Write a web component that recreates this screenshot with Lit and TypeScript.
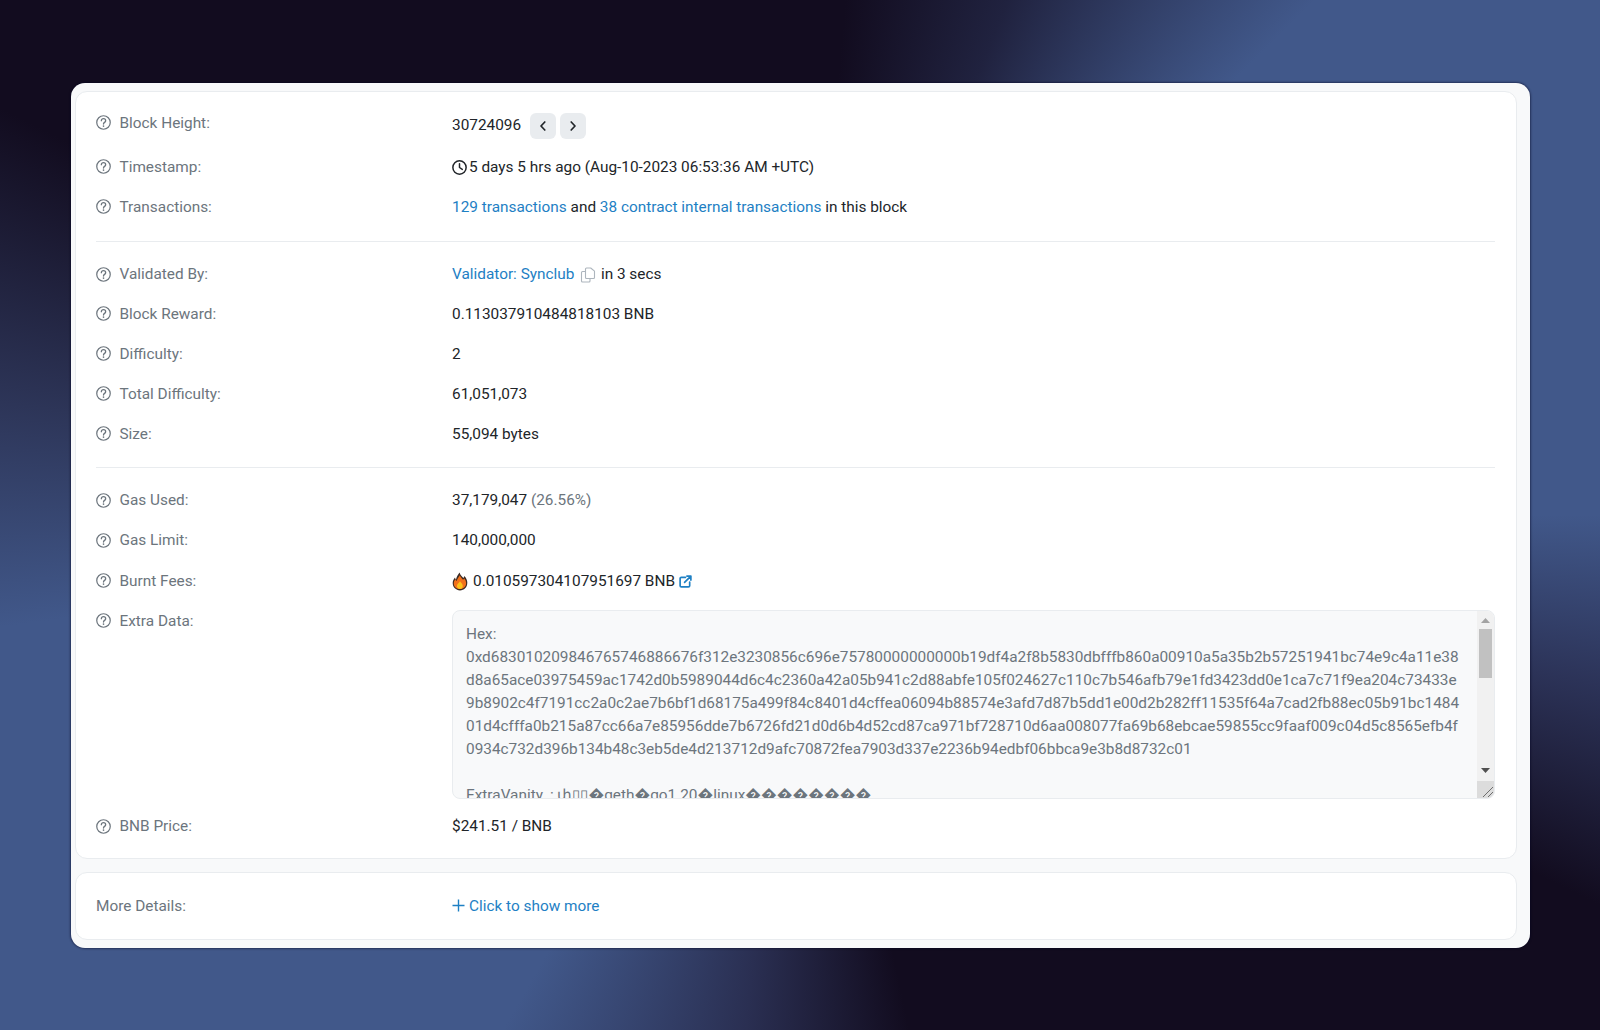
import { LitElement, html, css } from "lit";
import { customElement } from "lit/decorators.js";

const help = html`<svg class="help" viewBox="0 0 16 16" fill="none" stroke="#6c757d"><circle cx="8" cy="8" r="7.200" stroke-width="1.300"/><path d="M5.700 6.100C5.800 4.600 6.800 3.900 8 3.900c1.300 0 2.300.9 2.300 2.100 0 1.800-2.300 1.900-2.300 3.600" stroke-width="1.400" stroke-linecap="round"/><circle cx="8" cy="11.800" r=".9" fill="#6c757d" stroke="none"/></svg>`;

const row = (label: string, value: unknown) => html`<div class="row"><div class="label">${help}<span>${label}</span></div><div class="value">${value}</div></div>`;

const hexLines = [
  "Hex:",
  "0xd683010209846765746886676f312e3230856c696e75780000000000b19df4a2f8b5830dbfffb860a00910a5a35b2b57251941bc74e9c4a11e38",
  "d8a65ace03975459ac1742d0b5989044d6c4c2360a42a05b941c2d88abfe105f024627c110c7b546afb79e1fd3423dd0e1ca7c71f9ea204c73433e",
  "9b8902c4f7191cc2a0c2ae7b6bf1d68175a499f84c8401d4cffea06094b88574e3afd7d87b5dd1e00d2b282ff11535f64a7cad2fb88ec05b91bc1484",
  "01d4cfffa0b215a87cc66a7e85956dde7b6726fd21d0d6b4d52cd87ca971bf728710d6aa008077fa69b68ebcae59855cc9faaf009c04d5c8565efb4f",
  "0934c732d396b134b48c3eb5de4d213712d9afc70872fea7903d337e2236b94edbf06bbca9e3b8d8732c01",
  "",
  "ExtraVanity \u2009: \u0583\u25AF\u25AF\uFFFDgeth\uFFFDgo1.20\uFFFDlinux\uFFFD\uFFFD\uFFFD\uFFFD\uFFFD\uFFFD\uFFFD\uFFFD",
];

@customElement("app-root")
export class AppRoot extends LitElement {
  static styles = css`
    :host { display: block; font-family: Roboto, "Liberation Sans", sans-serif; font-size: 15.36px; color: #212529; }
    * { box-sizing: border-box; }
    .scene {
      height: 1030px; padding: 83px 70px 82px 71px;
      background: conic-gradient(from 0deg at 50% 50%, #120c1f 0deg, #120c1f 5deg, #20223f 22deg, #41588a 45deg, #41588a 90deg, #2c3358 102deg, #120c1f 116deg, #120c1f 168deg, #2a2f52 186deg, #41588a 210deg, #41588a 262deg, #2d3558 278deg, #120c1f 297deg, #120c1f 360deg);
    }
    .panel { height: 865px; background: #f8f9fa; border-radius: 14px; padding: 8px 13px 8px 4px; display: flex; flex-direction: column; gap: 13px; box-shadow: 0 0 2px 1px rgba(0, 0, 30, .45); }
    .card { background: #fff; border: 1px solid #e9ecef; border-radius: 12px; padding: 21px 21px 20px 20px; }
    .main { height: 769px; }
    .more { height: 68px; padding-top: 0; padding-bottom: 0; display: grid; grid-template-columns: 356px 1fr; align-items: center; }
    .section { display: flex; flex-direction: column; gap: 18.6px; }
    .row { display: grid; grid-template-columns: 356px 1fr; line-height: 21.6px; }
    .label { display: flex; align-items: center; gap: 8.500px; color: #6c757d; height: 21.600px; }
    .muted { color: #6c757d; }
    .help { width: 15px; height: 15px; flex: none; margin-top: -2px; }
    hr { border: 0; border-top: 1px solid #e9ecef; margin: 0; }
    .hr1 { margin: 22.500px 0 21.500px; }
    .hr2 { margin: 21px 0 22.500px; }
    .lead .row:first-child { padding-top: 1px; margin-bottom: -1px; }
    a { color: #1e80c4; text-decoration: none; }
    .first { display: flex; align-items: center; height: 27px; margin-top: -1px; margin-bottom: -1px; }
    .pager { display: flex; gap: 4px; margin-left: 9px; }
    .pager span { width: 26px; height: 26px; border-radius: 6px; background: #e9ecef; display: flex; align-items: center; justify-content: center; }
    .pager svg { width: 10px; height: 12px; }
    .inline { display: flex; align-items: center; }
    .clock { width: 15px; height: 15px; margin-right: 2px; }
    .copy { width: 16px; height: 16px; margin: 0 5px 0 5.500px; }
    .flame { width: 16px; height: 19px; margin-right: 5px; }
    .ext { width: 13px; height: 13px; margin-left: 4px; }
    .plus { width: 13px; height: 13px; margin-right: 4px; margin-top: -1px; }
    .box { position: relative; height: 189px; margin-top: -1px; margin-bottom: -1px; overflow: hidden; background: #f8f9fa; border: 1px solid #e9ecef; border-radius: 8px; padding: 12.500px 13px; color: #6c757d; line-height: 22.950px; white-space: pre; }
    .line { height: 22.950px; }
    .scroll { position: absolute; top: 0; right: 0; bottom: 0; width: 17px; background: #f1f1f1; }
    .thumb { position: absolute; left: 2px; top: 18px; width: 13px; height: 49px; background: #c1c1c1; }
    .up, .down { position: absolute; left: 4px; width: 9px; height: 5px; }
    .up { top: 7px; }
    .down { top: 157px; }
    .grip { position: absolute; left: 0; bottom: 0; width: 17px; height: 17px; background: #dcdcdc; }
  `;

  render() {
    const chevron = (d: string) => html`<svg viewBox="0 0 10 12" fill="none" stroke="#212529" stroke-width="1.700" stroke-linecap="round" stroke-linejoin="round"><path d=${d}/></svg>`;
    return html`<div class="scene"><div class="panel">
      <div class="card main">
        <div class="section">
          <div class="row"><div class="label">${help}<span>Block Height:</span></div>
            <div class="first"><span>30724096</span><div class="pager"><span>${chevron("M6.800 2 3 6l3.800 4")}</span><span>${chevron("M3.200 2 7 6l-3.800 4")}</span></div></div></div>
          ${row("Timestamp:", html`<div class="inline"><svg class="clock" viewBox="0 0 14 14" fill="none" stroke="#212529" stroke-width="1.400"><circle cx="7" cy="7" r="6.200"/><path d="M7 3.400V7l2.600 1.800" stroke-linecap="round" stroke-linejoin="round"/></svg><span>5 days 5 hrs ago (Aug-10-2023 06:53:36 AM +UTC)</span></div>`)}
          ${row("Transactions:", html`<a href="#">129 transactions</a> and <a href="#">38 contract internal transactions</a> in this block`)}
        </div>
        <hr class="hr1" />
        <div class="section lead">
          ${row("Validated By:", html`<div class="inline"><a href="#">Validator: Synclub</a><svg class="copy" viewBox="0 0 16 16" fill="none" stroke="#adb5bd" stroke-width="1.100" stroke-linejoin="round"><path d="M6.500 1h4.200L14.500 4.200V10.500a1 1 0 0 1-1 1h-7a1 1 0 0 1-1-1V2a1 1 0 0 1 1-1Z"/><path d="M5.500 4.500H2.500a1 1 0 0 0-1 1V14a1 1 0 0 0 1 1h6.500a1 1 0 0 0 1-1v-2.500"/></svg><span>in 3 secs</span></div>`)}
          ${row("Block Reward:", "0.113037910484818103 BNB")}
          ${row("Difficulty:", "2")}
          ${row("Total Difficulty:", "61,051,073")}
          ${row("Size:", "55,094 bytes")}
        </div>
        <hr class="hr2" />
        <div class="section">
          ${row("Gas Used:", html`37,179,047 <span class="muted">(26.56%)</span>`)}
          ${row("Gas Limit:", "140,000,000")}
          ${row("Burnt Fees:", html`<div class="inline"><svg class="flame" viewBox="0 0 16 19"><path d="M7.600.6c.6 2.600 2.200 3.600 3.800 5.400.5-.6.8-1.300.9-2 2 2.100 3 4.300 3 6.800 0 4.600-3.300 7.600-7.300 7.600S.7 15.300.7 11.100c0-2.300 1-4 2.300-5.500.2 1 .5 1.600 1 2.100C4.400 5 5.800 3 7.600.6Z" fill="#3a2a24"/><path d="M7.900 3.200c.4 1.800 2 3 3.200 4.500.5-.4.800-.9 1-1.400 1.300 1.500 2 3.100 2 5 0 3.200-2.400 5.800-6 5.800s-6.300-2.500-6.300-5.700c0-1.600.7-3 1.600-4.100.3.800.7 1.300 1.400 1.700.2-2 1.700-3.700 3.100-5.800Z" fill="#f2711c"/><path d="M8 9.300c.8 1.300 2.800 2.400 2.800 4.600 0 1.800-1.300 3-2.900 3s-3-1.200-3-2.900c0-2 2.100-2.900 3.100-4.700Z" fill="#fcc21b"/></svg><span>0.010597304107951697 BNB</span><svg class="ext" viewBox="0 0 14 14" fill="none" stroke="#1e80c4" stroke-width="1.800" stroke-linecap="round" stroke-linejoin="round"><path d="M7 2.500H2.500a1.300 1.300 0 0 0-1.300 1.300v7.700a1.300 1.300 0 0 0 1.300 1.300h7.700a1.300 1.300 0 0 0 1.300-1.300V7.500"/><path d="M6 8 12.500 1.500M8.500 1.200h4.300v4.300"/></svg></div>`)}
          ${row("Extra Data:", html`<div class="box">${hexLines.map((l) => html`<div class="line">${l}</div>`)}<div class="scroll">
            <svg class="up" viewBox="0 0 9 5"><path d="M4.500 0 9 5H0Z" fill="#a3a3a3"/></svg>
            <div class="thumb"></div>
            <svg class="down" viewBox="0 0 9 5"><path d="M0 0h9L4.500 5Z" fill="#505050"/></svg>
            <svg class="grip" viewBox="0 0 17 17" fill="none" stroke="#6e6e6e" stroke-width="1"><path d="M6 16 16 6M11 16l5-5"/></svg>
          </div></div>`)}
          ${row("BNB Price:", "$241.51 / BNB")}
        </div>
      </div>
      <div class="card more">
        <div class="muted">More Details:</div>
        <a class="inline" href="#"><svg class="plus" viewBox="0 0 13 13" fill="none" stroke="#1e80c4" stroke-width="1.400"><path d="M6.500.5v12M.5 6.500h12"/></svg><span>Click to show more</span></a>
      </div>
    </div></div>`;
  }
}
